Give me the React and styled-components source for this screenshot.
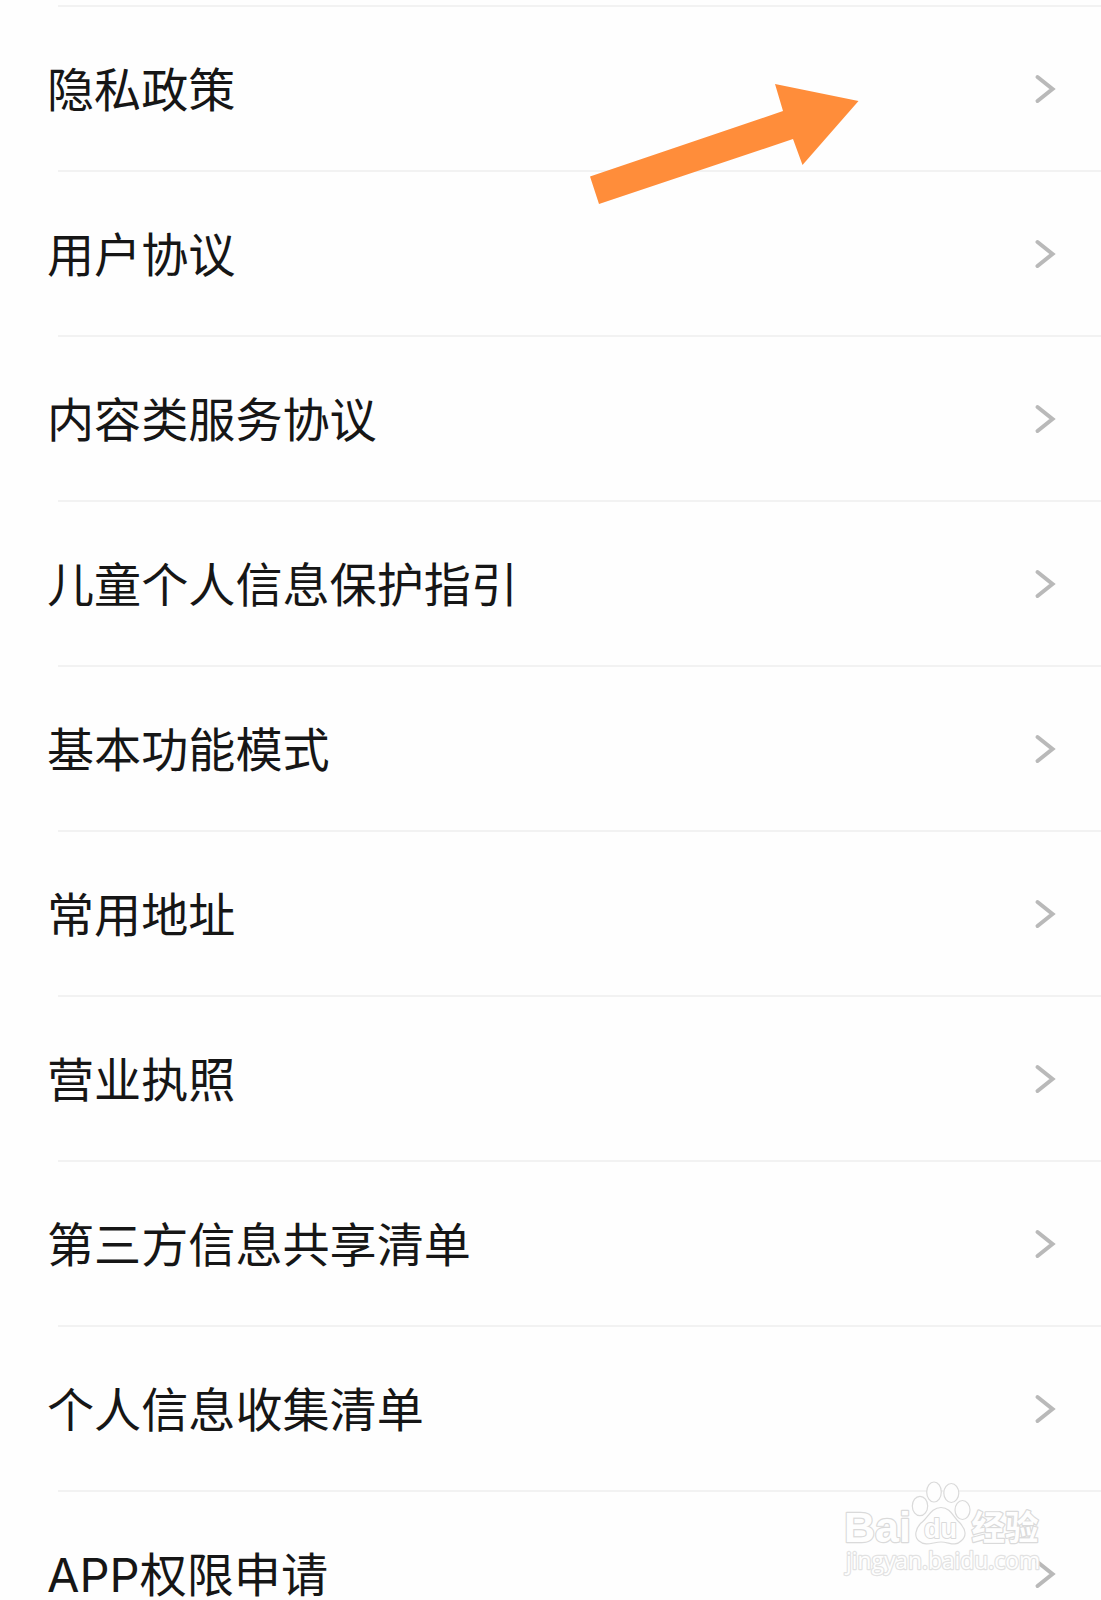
import React from 'react'
import styled, { createGlobalStyle } from 'styled-components'

const items = [
  '隐私政策',
  '用户协议',
  '内容类服务协议',
  '儿童个人信息保护指引',
  '基本功能模式',
  '常用地址',
  '营业执照',
  '第三方信息共享清单',
  '个人信息收集清单',
  'APP权限申请',
]

const Chevron = () => (
  <ChevronIcon viewBox="0 0 22 32">
    <path d="M3.5 4L18.5 16L3.5 28" />
  </ChevronIcon>
)

const Watermark = () => (
  <WatermarkIcon viewBox="0 0 210 110">
    <text className="brand" x="4" y="66" fontSize="43" textLength="67" lengthAdjust="spacingAndGlyphs">Bai</text>
    <ellipse cx="80" cy="30" rx="7.7" ry="9.7" />
    <ellipse cx="94" cy="16" rx="7.3" ry="10" />
    <ellipse cx="111.3" cy="17" rx="7.5" ry="9.5" />
    <ellipse cx="122.5" cy="34" rx="7.5" ry="9.5" />
    <path d="M101 31.5C91 31.5 88 42 81 47C75 53 74 61 79 65C86 71 93 66 101 66C109 66 115 71 121 65C127 60 126 54 120 47C113 41 111 31.5 101 31.5Z" />
    <text className="du" x="84" y="62" fontSize="28" textLength="33" lengthAdjust="spacingAndGlyphs">du</text>
    <text className="cn" x="131.5" y="64" fontSize="34" textLength="67" lengthAdjust="spacingAndGlyphs">经验</text>
    <text className="url" x="6" y="93" fontSize="23" textLength="194" lengthAdjust="spacingAndGlyphs">jingyan.baidu.com</text>
  </WatermarkIcon>
)

const App = () => {
  return (
    <Wrapper>
      <GlobalStyle />
      <List>
        {items.map((item) => (
          <Row key={item}>
            <Label>{item}</Label>
            <Chevron />
          </Row>
        ))}
      </List>
      <Arrow viewBox="0 0 280 130">
        <path d="M10 96.5L203 31L195 4L278.5 21L222.5 85L213 59L19 124Z" />
      </Arrow>
      <Watermark />
    </Wrapper>
  )
}

const GlobalStyle = createGlobalStyle`
  body {
    margin: 0;
    background: #fefefe;
  }
`

const Wrapper = styled.main`
  position: relative;
  height: 1600px;
  overflow: hidden;
  background: #fefefe;
  font-family: Inter, 'Noto Sans CJK SC', sans-serif;
`

const List = styled.ul`
  list-style: none;
  margin: 0;
  padding: 5px 0 0;
`

const Row = styled.li`
  display: flex;
  align-items: center;
  justify-content: space-between;
  box-sizing: border-box;
  height: 165px;
  padding: 0 45px 0 47px;
  background: linear-gradient(#f2f2f2, #f2f2f2) 58px 0 / 100% 2px no-repeat;
`

const Label = styled.span`
  margin-top: 4px;
  font-size: 47.1px;
  line-height: 60px;
  color: #161616;
`

const ChevronIcon = styled.svg`
  width: 22px;
  height: 32px;
  margin-top: 3px;

  path {
    fill: none;
    stroke: #b9b9b9;
    stroke-width: 4;
    stroke-linecap: round;
    stroke-linejoin: miter;
  }
`

const Arrow = styled.svg`
  position: absolute;
  top: 80px;
  left: 580px;
  width: 280px;
  height: 130px;
  fill: #ff8d3a;
`

const WatermarkIcon = styled.svg`
  position: absolute;
  top: 1476px;
  left: 840px;
  width: 210px;
  height: 110px;
  fill: #fefefe;
  stroke: #dadada;
  stroke-width: 1.2;

  text {
    paint-order: stroke;
    stroke-width: 2.4;
    stroke-linejoin: round;
  }
  .brand,
  .du {
    font-family: 'Liberation Sans', sans-serif;
    font-weight: 700;
  }
  .du {
    stroke-width: 2;
  }
  .cn {
    font-family: 'Noto Sans CJK SC', sans-serif;
    font-weight: 700;
  }
  .url {
    font-family: 'Open Sans', sans-serif;
    stroke: #e2e2e2;
  }
`

export default App
